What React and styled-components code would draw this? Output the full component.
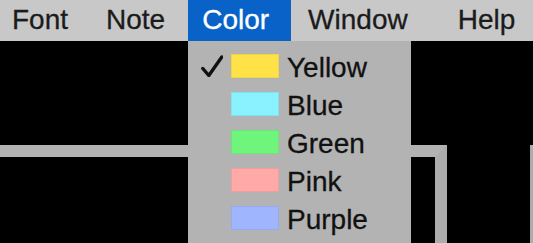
import React from "react";
import styled, { createGlobalStyle } from "styled-components";

const GlobalStyle = createGlobalStyle`
  html, body {
    margin: 0;
    padding: 0;
    background: #000;
  }
  body {
    font-family: "Liberation Sans", Arial, sans-serif;
  }
`;

const Screen = styled.div`
  width: 533px;
  height: 243px;
  overflow: hidden;
  display: flex;
  flex-direction: column;
  background: #000;
`;

const MenuBar = styled.div`
  height: 41px;
  flex: none;
  display: flex;
  align-items: stretch;
  background: #c8c8c8;
`;

const MenuTitle = styled.div`
  display: flex;
  align-items: center;
  padding: 0 ${(p) => p.$right}px 2px ${(p) => p.$left}px;
  font-size: 28px;
  -webkit-text-stroke: 0.3px currentColor;
  color: ${(p) => (p.$active ? "#ffffff" : "#1b1b1b")};
  background: ${(p) => (p.$active ? "#0862c8" : "transparent")};
`;

const Desktop = styled.div`
  position: relative;
  flex: 1;
  background: #000;
`;

const WindowFrame = styled.div`
  position: absolute;
  left: ${(p) => p.$x}px;
  top: ${(p) => p.$y}px;
  width: ${(p) => p.$w}px;
  height: 200px;
  box-sizing: border-box;
  border: ${(p) => p.$border}px solid #acacac;
  border-top-color: #b2b2b2;
`;

const Dropdown = styled.div`
  position: absolute;
  left: 188px;
  top: 0;
  width: 223px;
  height: 220px;
  padding-top: 6px;
  box-sizing: border-box;
  background: #b3b3b3;
  display: flex;
  flex-direction: column;
`;

const Item = styled.div`
  height: 38px;
  display: flex;
  align-items: center;
  padding-left: 13px;
  gap: 8px;
`;

const CheckSlot = styled.div`
  width: 22px;
  height: 22px;
  flex: none;
`;

const Swatch = styled.div`
  width: 48px;
  height: 24px;
  flex: none;
  box-sizing: border-box;
  background: ${(p) => p.$color};
  border: 1px solid rgba(0, 0, 0, 0.06);
`;

const Label = styled.span`
  font-size: 28px;
  line-height: 30px;
  margin-top: 3px;
  color: #111;
  -webkit-text-stroke: 0.3px currentColor;
`;

const titles = [
  { name: "Font", left: 12, right: 18 },
  { name: "Note", left: 20, right: 23 },
  { name: "Color", left: 14, right: 22, active: true },
  { name: "Window", left: 17, right: 25 },
  { name: "Help", left: 25, right: 12 },
];

const colors = [
  { name: "Yellow", color: "#fee248", checked: true },
  { name: "Blue", color: "#8af2ff" },
  { name: "Green", color: "#70f57c" },
  { name: "Pink", color: "#ffa9a9" },
  { name: "Purple", color: "#9fb6ff" },
];

const Check = () => (
  <svg width="22" height="22" viewBox="0 0 22 22">
    <path
      d="M1.8 13.5 L7.8 20.5 L20.8 2"
      fill="none"
      stroke="#111"
      strokeWidth="3.4"
      strokeLinecap="round"
      strokeLinejoin="round"
    />
  </svg>
);

const App = () => {
  return (
    <>
      <GlobalStyle />
      <Screen>
        <MenuBar>
          {titles.map((t) => (
            <MenuTitle
              key={t.name}
              $left={t.left}
              $right={t.right}
              $active={t.active}
            >
              {t.name}
            </MenuTitle>
          ))}
        </MenuBar>
        <Desktop>
          <WindowFrame $x={-12} $y={104} $w={459} $border={12} />
          <WindowFrame $x={530} $y={104} $w={40} $border={3} />
          <Dropdown>
            {colors.map((c) => (
              <Item key={c.name}>
                <CheckSlot>{c.checked && <Check />}</CheckSlot>
                <Swatch $color={c.color} />
                <Label>{c.name}</Label>
              </Item>
            ))}
          </Dropdown>
        </Desktop>
      </Screen>
    </>
  );
};

export default App;
